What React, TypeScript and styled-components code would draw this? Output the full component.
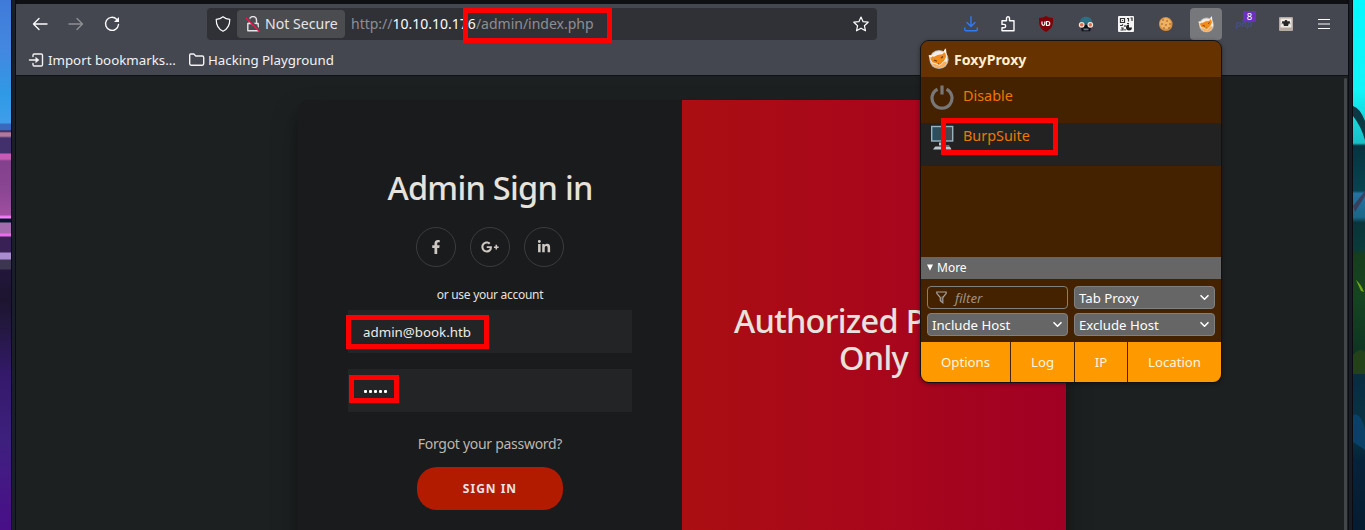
import React from "react";
import styled, { createGlobalStyle } from "styled-components";
import { FaFacebookF, FaGooglePlusG, FaLinkedinIn } from "react-icons/fa";

const GlobalStyle = createGlobalStyle`
  * { box-sizing: border-box; }
  body { margin: 0; background: #0f1014; font-family: "Noto Sans", "Open Sans", sans-serif; }
  svg { display: block; }
`;

const Desktop = styled.div`
  position: relative;
  display: flex;
  width: 1365px;
  height: 530px;
  overflow: hidden;
`;

const WallpaperLeft = styled.div`
  width: 11px;
  background: linear-gradient(180deg,
    #3f7ad8 0, #4388e0 50px, #2f9ae6 95px, #3f9eea 123px, #3a68bd 124px, #3a68bd 130px,
    #3a1740 131px, #b07aa0 133px, #b07aa0 136px, #41306c 138px, #41306c 153px,
    #cc59bb 154px, #c35db3 159px, #83408c 161px, #8a4593 190px, #a14f9f 215px,
    #f06bf2 216px, #f58af5 218px, #07152c 219px, #07152c 222px, #a36aad 223px, #a36aad 233px,
    #f06bf2 234px, #e56bea 236px, #3a2155 237px, #3a2155 252px, #a98bd0 253px, #a98bd0 259px,
    #3d3650 260px, #3d3650 269px, #22163a 270px, #1c1530 300px, #241842 330px,
    #34196b 375px, #3d207d 440px, #431a83 470px, #480f88 530px);
`;

const WallpaperRight = styled.div`
  width: 12px;
  overflow: hidden;
`;

const Frame = styled.div`
  width: 1342px;
  display: flex;
  flex-direction: column;
  padding: 4px 5px 0;
  background: linear-gradient(90deg, #090b10 0 1px, #1a1e29 1px 4px, #0b0d12 4px 6px, #0f1014 6px 1336px, #0b0d12 1336px 1338px, #1a1c25 1338px 1341px, #090b10 1341px);
`;

const NavBar = styled.div`
  height: 40px;
  display: flex;
  align-items: center;
  background: #44474f;
  color: #fbfbfe;
  padding-left: 6px;
`;

const NavButton = styled.div<{ $dim?: boolean }>`
  width: 36px;
  height: 32px;
  display: grid;
  place-items: center;
  opacity: ${(p) => (p.$dim ? 0.4 : 1)};
`;

const UrlBar = styled.div`
  width: 670px;
  height: 32px;
  margin-left: 77px;
  padding: 0 8px 0 8px;
  display: flex;
  align-items: center;
  background: #303136;
  border-radius: 4px;
`;

const Security = styled.div`
  width: 108px;
  height: 28px;
  margin-left: 6px;
  padding: 0 0 1px 8px;
  display: flex;
  align-items: center;
  gap: 4px;
  border-radius: 4px;
  background: #4b4c50;
  font-size: 14.1px;
  white-space: nowrap;
  color: #e5e5e8;
`;

const Url = styled.div`
  flex: 1;
  margin-left: 6px;
  padding-bottom: 1px;
  font-size: 14px;
  color: #8e8e93;
  white-space: nowrap;
  b { font-weight: 400; color: #fbfbfe; }
`;

const Extensions = styled.div`
  display: flex;
  align-items: center;
  margin-left: 75px;
`;

const ExtSlot = styled.div<{ $w?: number }>`
  width: ${(p) => p.$w ?? 40}px;
  height: 32px;
  display: grid;
  place-items: center;
`;

const ActiveExt = styled.div`
  width: 32px;
  height: 32px;
  display: grid;
  place-items: center;
  border-radius: 4px;
  background: #77787c;
`;

const BadgeHolder = styled.div`
  position: relative;
  width: 20px;
  height: 20px;
  padding-top: 4px;
  font: italic 700 9px/12px "Liberation Sans", sans-serif;
  color: #454f85;
`;

const Badge = styled.span`
  position: absolute;
  left: 7px;
  top: -3px;
  width: 13px;
  height: 11px;
  border-radius: 1px;
  background: #6533be;
  color: #fff;
  font: 400 9.5px/11px "Noto Sans", sans-serif;
  text-align: center;
`;

const Bookmarks = styled.div`
  height: 32px;
  display: flex;
  align-items: center;
  padding-left: 12px;
  background: #44474f;
  border-bottom: 1px solid #101214;
  color: #f2f2f4;
  font-size: 13.3px;
`;

const Bookmark = styled.div<{ $w: number; $gap: number }>`
  width: ${(p) => p.$w}px;
  display: flex;
  align-items: center;
  gap: ${(p) => p.$gap}px;
  white-space: nowrap;
`;

const Page = styled.div`
  flex: 1;
  display: flex;
  align-items: stretch;
  padding: 24px 1px 0 282px;
  background: #1d2021;
  overflow: hidden;
`;

const Card = styled.div`
  width: 768px;
  height: 480px;
  display: flex;
  border-radius: 10px 10px 0 0;
  box-shadow: 0 14px 28px rgba(0,0,0,.25), 0 10px 10px rgba(0,0,0,.22);
`;

const SignIn = styled.div`
  width: 384px;
  padding: 69px 50px 0;
  display: flex;
  flex-direction: column;
  align-items: center;
  background: #1a1b1c;
  border-radius: 10px 0 0 0;
`;

const Title = styled.h1`
  margin: 0;
  height: 37px;
  font-size: 32.5px;
  line-height: 37px;
  font-weight: 500;
  letter-spacing: -0.72px;
  color: #e6e2dd;
  white-space: nowrap;
`;

const Socials = styled.div`
  display: flex;
  gap: 14px;
  margin-top: 21px;
`;

const Social = styled.div`
  width: 40px;
  height: 40px;
  display: grid;
  place-items: center;
  border: 1px solid #3a3c3e;
  border-radius: 50%;
  color: #cdc8c2;
`;

const Hint = styled.span`
  height: 16px;
  margin-top: 19px;
  font-size: 12px;
  line-height: 17px;
  letter-spacing: -0.29px;
  color: #e6e2dd;
`;

const Field = styled.div<{ $gap: number }>`
  width: 284px;
  height: 43px;
  flex: none;
  margin-top: ${(p) => p.$gap}px;
  padding-left: 15px;
  display: flex;
  align-items: center;
  background: #232425;
  color: #eeebe8;
  font-size: 13.33px;
`;

const Dots = styled.div`
  display: flex;
  gap: 2px;
  margin: 2px 0 0 1px;
  i { width: 3px; height: 3px; border-radius: 1px; background: #fff; }
`;

const Forgot = styled.a`
  height: 20px;
  margin-top: 22px;
  line-height: 20px;
  font-size: 14px;
  letter-spacing: -0.29px;
  color: #bdb7af;
`;

const SubmitButton = styled.div`
  width: 146px;
  height: 43px;
  margin-top: 13px;
  display: grid;
  place-items: center;
  border-radius: 20px;
  background: #b21b00;
  color: #e8e4e0;
  font-size: 12px;
  font-weight: 700;
  letter-spacing: 1px;
`;

const Notice = styled.div`
  width: 384px;
  padding: 202px 0 0 52px;
  background: linear-gradient(90deg, #ab0e12, #a8071b 50%, #a10024);
  border-radius: 0 10px 0 0;
`;

const NoticeEnd = styled(Title)`
  padding-left: 105px;
`;

const ScrollTrack = styled.div`
  width: 3px;
  height: 460px;
  margin: -22px 0 0 auto;
  background: #424648;
  border-radius: 2px;
`;

const Popup = styled.div`
  position: absolute;
  left: 920px;
  top: 40px;
  width: 302px;
  height: 343px;
  display: flex;
  flex-direction: column;
  border: 1px solid #121212;
  border-radius: 9px;
  overflow: hidden;
  background: #442200;
  box-shadow: 0 1px 4px rgba(0,0,0,.4);
`;

const PopupHeader = styled.div`
  height: 36px;
  padding-left: 7px;
  display: flex;
  align-items: center;
  gap: 4px;
  background: #663300;
  color: #ffefd0;
  font-size: 14.2px;
  font-weight: 700;
`;

const ProxyRow = styled.div<{ $active?: boolean }>`
  height: ${(p) => (p.$active ? 43 : 46)}px;
  padding: ${(p) => (p.$active ? "2px 0 0 9px" : "7px 0 0 9px")};
  display: flex;
  align-items: flex-start;
  gap: 9px;
  background: ${(p) => (p.$active ? "#222222" : "transparent")};
  color: #ee7700;
  font-size: 14.4px;
  line-height: ${(p) => (p.$active ? 22 : 24)}px;
`;

const MoreBar = styled.div`
  height: 22px;
  margin-top: 91px;
  padding: 0 0 1px 6px;
  display: flex;
  align-items: center;
  gap: 4px;
  background: #666666;
  color: #fff;
  font-size: 12px;
`;

const Controls = styled.div`
  display: grid;
  grid-template-columns: 141px 141px;
  grid-auto-rows: 23px;
  gap: 4px 6px;
  padding: 7px 6px 6px;
`;

const Control = styled.div<{ $input?: boolean }>`
  display: flex;
  align-items: center;
  justify-content: ${(p) => (p.$input ? "flex-start" : "space-between")};
  gap: 8px;
  padding: ${(p) => (p.$input ? "0 8px" : "0 4px")};
  border: 1px solid #808080;
  border-radius: 4px;
  background: ${(p) => (p.$input ? "transparent" : "#666666")};
  color: ${(p) => (p.$input ? "#a1907f" : "#ffffff")};
  font-size: 13.2px;
  font-style: ${(p) => (p.$input ? "italic" : "normal")};
`;

const Footer = styled.div`
  flex: 1;
  display: grid;
  grid-template-columns: 89px 63px 52px 1fr;
  gap: 1px;
`;

const FooterButton = styled.div`
  display: grid;
  place-items: center;
  background: #ff9900;
  color: #fff6e0;
  font-size: 13.2px;
`;

const Highlight = styled.div<{ $x: number; $y: number; $w: number; $h: number }>`
  position: absolute;
  left: ${(p) => p.$x}px;
  top: ${(p) => p.$y}px;
  width: ${(p) => p.$w}px;
  height: ${(p) => p.$h}px;
  border: 5px solid #ff0000;
`;

const line = { fill: "none", stroke: "currentColor", strokeWidth: 1.4, strokeLinecap: "round", strokeLinejoin: "round" } as const;

const Fox = ({ size }: { size: number }) => (
  <svg width={size} height={size} viewBox="0 0 22 22">
    <circle cx="11" cy="11.5" r="9.6" fill="#b9b7b3" />
    <circle cx="11" cy="11.5" r="8.4" fill="#efeeec" />
    <path d="M3 13c1 4 4 7.500 9 7 4-1 6-3 7-6l-4-1z" fill="#f8ad5c" />
    <path d="M1 7.500l5 .8 4-2 4.500-.5 3-5 1 8-2 4-4.500 4.500-4-1.500-4-1-1.500-3z" fill="#f08c1d" stroke="#fff" strokeWidth=".8" />
    <path d="M6 12l3 1.200M13 10l2-1.500M10 16l1-.3" stroke="#683b1b" strokeWidth="1.200" />
    <path d="M1 7.500l3 .4-1 2zM17.500 1l.8 5-2.500-2z" fill="#fff" />
  </svg>
);

const Chevron = () => (
  <svg width="11" height="11" viewBox="0 0 11 11"><path d="M2 3.700l3.500 3.500L9 3.700" {...line} strokeWidth={1.6} /></svg>
);

export default function App() {
  return (
    <Desktop>
      <GlobalStyle />
      <WallpaperLeft />
      <Frame>
        <NavBar>
          <NavButton>
            <svg width="16" height="16" viewBox="0 0 16 16"><path d="M15 8H1.500M7 2.500L1.500 8 7 13.500" {...line} /></svg>
          </NavButton>
          <NavButton $dim>
            <svg width="16" height="16" viewBox="0 0 16 16"><path d="M1 8h13.500M9 2.500L14.500 8 9 13.500" {...line} /></svg>
          </NavButton>
          <NavButton>
            <svg width="16" height="16" viewBox="0 0 16 16">
              <path d="M12.600 3.200A6.500 6.500 0 1 0 14.500 8.500" {...line} />
              <path d="M15 1v5h-5z" fill="currentColor" />
            </svg>
          </NavButton>
          <UrlBar>
            <svg width="16" height="16" viewBox="0 0 16 16"><path d="M8 .8C6 2.500 3.500 3.200 1.200 3.300c0 5.200 1.500 9.600 6.800 12 5.300-2.400 6.800-6.800 6.800-12C12.500 3.200 10 2.500 8 .8z" {...line} strokeWidth={1.200} /></svg>
            <Security>
              <svg width="16" height="16" viewBox="0 0 16 16">
                <path d="M4.500 7V4a3.500 3.500 0 0 1 7 0v3M2.800 7.500h10.400v7.300H2.800z" {...line} />
                <path d="M1.500 1L15 14.500" stroke="#4b4c50" strokeWidth="2" />
                <path d="M1 2L14.500 15.500" stroke="#f0144c" strokeWidth="1.300" />
              </svg>
              Not Secure
            </Security>
            <Url>http://<b>10.10.10.176</b>/admin/index.php</Url>
            <svg width="16" height="16" viewBox="0 0 16 16"><path d="M8 1l2.100 4.700 5.100.5-3.800 3.500 1.100 5.100L8 12.200l-4.500 2.600 1.100-5.100L.8 6.200l5.100-.5z" {...line} strokeWidth={1.200} /></svg>
          </UrlBar>
          <Extensions>
            <ExtSlot $w={38}>
              <svg width="16" height="16" viewBox="0 0 16 16" color="#2f7af5"><path d="M8 .8v9.500M4 6.500l4 4 4-4M1.800 12v1.500c0 .8.500 1.300 1.300 1.300h9.900c.8 0 1.300-.5 1.300-1.300V12" {...line} /></svg>
            </ExtSlot>
            <ExtSlot $w={36}>
              <svg width="16" height="16" viewBox="0 0 16 16"><path d="M2 6.500V4.800h4.500V2.300a1.500 1.500 0 0 1 3 0v2.500H14v10H2v-3h2a1.700 1.700 0 0 0 0-3.400H2z" {...line} /></svg>
            </ExtSlot>
            <ExtSlot>
              <svg width="16" height="16" viewBox="0 0 16 16">
                <path d="M8 0c2 1.300 4 2 7 2 0 6 .2 10-7 14C.8 12 1 8 1 2c3 0 5-.7 7-2z" fill="#800008" />
                <path d="M4 5.500v2.300c0 2 2.800 2 2.800 0V5.500M8.500 5.500v4h1.300c2.600 0 2.600-4 0-4z" fill="none" stroke="#fff" strokeWidth="1.200" />
              </svg>
            </ExtSlot>
            <ExtSlot>
              <svg width="16" height="16" viewBox="0 0 16 16">
                <path d="M2 7.500C1.500 3 4.500.8 8 .8s6.500 2.200 6 6.700z" fill="#2a7186" />
                <path d="M2.500 9h11l-1.300 6.200H3.800z" fill="#0c1218" />
                <path d="M5.500 12.500h5v1.800h-5z" fill="#607780" />
                <circle cx="3.700" cy="8.800" r="2.300" fill="#e8674c" stroke="#efe3dc" strokeWidth="1.200" />
                <circle cx="12.300" cy="8.800" r="2.300" fill="#e8674c" stroke="#efe3dc" strokeWidth="1.200" />
              </svg>
            </ExtSlot>
            <ExtSlot>
              <svg width="16" height="16" viewBox="0 0 16 16">
                <rect width="16" height="16" rx="1" fill="#f5f5f5" />
                <path d="M2.500 2.500h4v4h-4zM9 2.500h1.500v3M12.500 2h1.500v3M9 7.500h2M2 9.500h2l1-1M3 12h2v2H2.500M7 9v2M7 13v1.500" fill="none" stroke="#333" strokeWidth="1.200" />
                <path d="M4 4h1v1H4z" fill="#333" />
                <path d="M11 8.500v3h3a3 3 0 1 1-3-3z" fill="#222" />
              </svg>
            </ExtSlot>
            <ExtSlot>
              <svg width="16" height="16" viewBox="0 0 16 16">
                <path d="M8 1c2 0 2 1 4 1.500 1 2 3 2.500 2.500 5.500 0 4-2.500 7-6.500 7s-7-3-7-7 3-7 7-7z" fill="#d68f40" />
                <circle cx="7.500" cy="7.500" r="5.500" fill="#f0b262" />
                {[[5, 4], [9, 5], [4, 8], [8, 9], [12, 8], [6, 12], [11, 12]].map(([x, y]) => <circle key={`${x}-${y}`} cx={x} cy={y} r=".8" fill="#8a5423" />)}
              </svg>
            </ExtSlot>
            <ExtSlot><ActiveExt><Fox size={17} /></ActiveExt></ExtSlot>
            <ExtSlot><BadgeHolder>php<Badge>8</Badge></BadgeHolder></ExtSlot>
            <ExtSlot>
              <svg width="14" height="14" viewBox="0 0 14 14">
                <rect width="14" height="14" rx="1" fill="#b5aaa2" />
                <rect x="1.500" y="1.500" width="11" height="9" fill="#eeeae6" />
                <path d="M5.500 4.500c0-2 3-2 3 0l2-.5 1 3.500-1.500-1.500L9 9H5L4 6 2.500 7.500l1-3.500z" fill="#252525" />
              </svg>
            </ExtSlot>
            <ExtSlot $w={36}>
              <svg width="12" height="12" viewBox="0 0 12 12"><path d="M.5 1.500h11M.5 6h11M.5 10.500h11" {...line} strokeWidth={1.200} /></svg>
            </ExtSlot>
          </Extensions>
        </NavBar>
        <Bookmarks>
          <Bookmark $w={160} $gap={4}>
            <svg width="16" height="16" viewBox="0 0 16 16">
              <path d="M5 4.500V3.300c0-.8.500-1.300 1.300-1.300h6.900c.8 0 1.300.5 1.300 1.300v9.400c0 .8-.5 1.300-1.300 1.300H6.300c-.8 0-1.300-.5-1.300-1.300v-1.200M1.500 8h7" {...line} />
              <path d="M7.500 4.700L11.300 8l-3.800 3.300z" fill="currentColor" />
            </svg>
            Import bookmarks...
          </Bookmark>
          <Bookmark $w={160} $gap={3}>
            <svg width="17" height="16" viewBox="0 0 17 16"><path d="M2.500 2h3.300l2 2h6.500c.8 0 1.400.6 1.400 1.400v6.400c0 .8-.6 1.400-1.400 1.400H3.100c-.8 0-1.400-.6-1.400-1.400V3.200c0-.7.300-1.200.8-1.200" {...line} /></svg>
            Hacking Playground
          </Bookmark>
        </Bookmarks>
        <Page>
          <Card>
            <SignIn>
              <Title>Admin Sign in</Title>
              <Socials>
                <Social><FaFacebookF size={14} /></Social>
                <Social><FaGooglePlusG size={18} /></Social>
                <Social><FaLinkedinIn size={14} /></Social>
              </Socials>
              <Hint>or use your account</Hint>
              <Field $gap={8}>admin@book.htb</Field>
              <Field $gap={16}><Dots><i /><i /><i /><i /><i /></Dots></Field>
              <Forgot>Forgot your password?</Forgot>
              <SubmitButton>SIGN IN</SubmitButton>
            </SignIn>
            <Notice>
              <Title>Authorized P</Title>
              <NoticeEnd>Only</NoticeEnd>
            </Notice>
          </Card>
          <ScrollTrack />
        </Page>
      </Frame>
      <WallpaperRight>
        <svg width="12" height="530" viewBox="0 0 12 530">
          <defs>
            <linearGradient id="jungle" x1="0" y1="0" x2="0" y2="530" gradientUnits="userSpaceOnUse">
              <stop offset="0" stopColor="#05f7ff" /><stop offset=".17" stopColor="#12f5fa" />
              <stop offset=".27" stopColor="#19bfc5" /><stop offset=".275" stopColor="#07333f" />
              <stop offset=".36" stopColor="#074350" /><stop offset=".365" stopColor="#2471a4" />
              <stop offset=".41" stopColor="#1a6788" /><stop offset=".42" stopColor="#0a3439" />
              <stop offset=".47" stopColor="#0b3a3b" /><stop offset=".48" stopColor="#173d1d" />
              <stop offset=".56" stopColor="#164420" /><stop offset=".66" stopColor="#103523" />
              <stop offset=".72" stopColor="#092c43" /><stop offset=".82" stopColor="#0a3443" />
              <stop offset=".87" stopColor="#06223a" /><stop offset="1" stopColor="#061c30" />
            </linearGradient>
          </defs>
          <path fill="url(#jungle)" d="M0 0h12v530H0z" />
          <path d="M0 106q7 2 12 15v19q-4-14-12-24z" fill="#0a3843" />
          <path d="M0 206l12-15v5L2 212z" fill="#37405f" />
          <path d="M3 280q5 4 8 12l-3-1z" fill="#71a71b" />
          <path d="M0 355q7-8 12-3v22H0z" fill="#24421a" />
          <path d="M0 415q8-3 12 15v20q-7-5-12-8z" fill="#0b4166" />
        </svg>
      </WallpaperRight>
      <Popup>
        <PopupHeader><Fox size={22} />FoxyProxy</PopupHeader>
        <ProxyRow>
          <svg width="24" height="26" viewBox="0 0 24 26"><path d="M7.500 5.200a10 10 0 1 0 9 0M12 1.500v9" fill="none" stroke="#777" strokeWidth="3.200" /></svg>
          Disable
        </ProxyRow>
        <ProxyRow $active>
          <svg width="24" height="26" viewBox="0 0 24 26">
            <defs><linearGradient id="screen"><stop stopColor="#245064" /><stop offset="1" stopColor="#474747" /></linearGradient></defs>
            <rect x="1.700" y="1.500" width="21" height="14.500" fill="url(#screen)" stroke="#9ab2be" strokeWidth="1.400" />
            <path d="M9 17.500h7v2.500h3l2.500 4.500H3L5.500 21H9z" fill="#bac9cf" />
            <path d="M4 21h16" stroke="#222" strokeWidth="1" />
          </svg>
          BurpSuite
        </ProxyRow>
        <MoreBar>
          <svg width="6" height="7" viewBox="0 0 6 7"><path d="M0 .5h6L3 6.800z" fill="currentColor" /></svg>
          More
        </MoreBar>
        <Controls>
          <Control $input>
            <svg width="11" height="13" viewBox="0 0 11 13"><path d="M.8 1h9.400v1.300L6.800 6.500v5.200L4.300 9.800V6.500L.8 2.300z" fill="none" stroke="#a8a29c" strokeWidth="1.200" /><path d="M5.500 5.500h1.300v5.800l-1.300-1z" fill="#888" /></svg>
            filter
          </Control>
          <Control>Tab Proxy<Chevron /></Control>
          <Control>Include Host<Chevron /></Control>
          <Control>Exclude Host<Chevron /></Control>
        </Controls>
        <Footer>
          <FooterButton>Options</FooterButton>
          <FooterButton>Log</FooterButton>
          <FooterButton>IP</FooterButton>
          <FooterButton>Location</FooterButton>
        </Footer>
      </Popup>
      <Highlight $x={463} $y={8} $w={149} $h={35} />
      <Highlight $x={941} $y={118} $w={117} $h={37} />
      <Highlight $x={346} $y={315} $w={143} $h={34} />
      <Highlight $x={349} $y={375} $w={50} $h={28} />
    </Desktop>
  );
}
